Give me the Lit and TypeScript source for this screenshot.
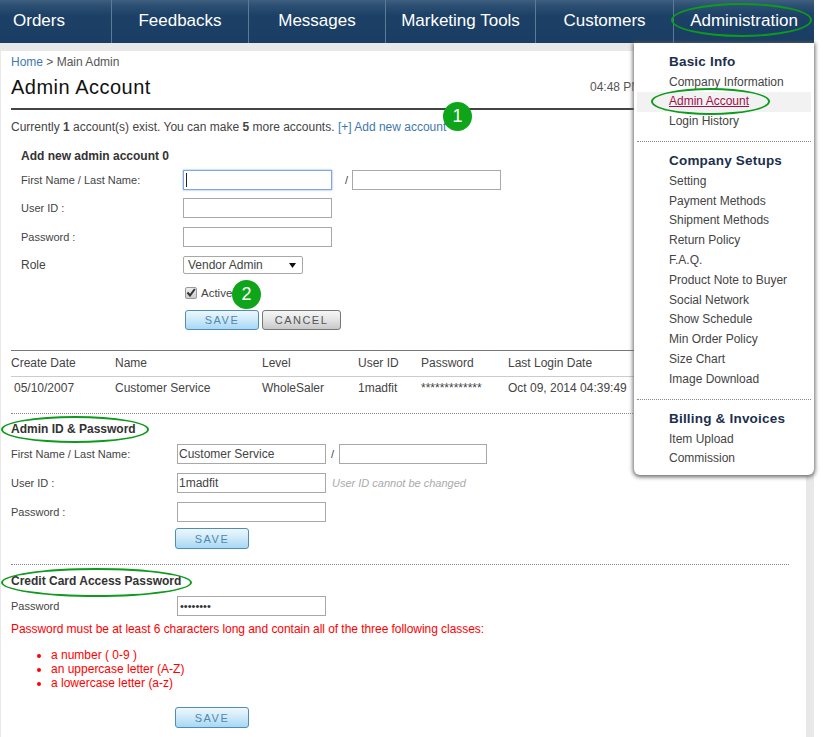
import { LitElement, html, css } from "lit";
import { customElement } from "lit/decorators.js";

const NAV = ["Orders", "Feedbacks", "Messages", "Marketing Tools", "Customers", "Administration"];
const MENU: { title: string; items: string[] }[] = [
  { title: "Basic Info", items: ["Company Information", "Admin Account", "Login History"] },
  { title: "Company Setups", items: ["Setting", "Payment Methods", "Shipment Methods", "Return Policy", "F.A.Q.", "Product Note to Buyer", "Social Network", "Show Schedule", "Min Order Policy", "Size Chart", "Image Download"] },
  { title: "Billing & Invoices", items: ["Item Upload", "Commission"] },
];

@customElement("app-root")
export class AppRoot extends LitElement {
  static styles = css`
    :host { display: block; position: relative; width: 823px; height: 737px; overflow: hidden; background: #fff;
      font-family: "Liberation Sans", Arial, sans-serif; font-size: 12px; color: #444; }
    * { box-sizing: border-box; }
    .shell { width: 814px; height: 737px; background: #e8e8e8; }
    nav { display: flex; height: 43px; background: linear-gradient(#3f5f7f 0, #2b4e72 6px, #1c4066 16px, #1a3d63 100%); }
    .tab { display: flex; align-items: center; justify-content: center; height: 43px; color: #fff; font-size: 17px; border-left: 1px solid #5d7a96; padding-bottom: 2px; }
    .tab:nth-child(1) { width: 111px; border-left: 0; justify-content: flex-start; padding-left: 13px; }
    .tab:nth-child(2) { width: 137px; }
    .tab:nth-child(3) { width: 137px; }
    .tab:nth-child(4) { width: 150px; }
    .tab:nth-child(5) { width: 138px; }
    .tab:nth-child(6) { width: 141px; }
    main { margin: 8px 0 0 1px; width: 805px; height: 686px; background: #fff; padding: 1px 17px 0 10px; }
    .crumb { line-height: 20px; color: #555; }
    a { color: #3f78ad; text-decoration: none; }
    .head { display: flex; justify-content: space-between; align-items: center; height: 30px; }
    h1 { margin: 0; font-size: 20px; font-weight: 400; color: #111; letter-spacing: .5px; }
    .time { width: 199px; white-space: nowrap; color: #555; }
    .rule { height: 2px; background: #444; margin-top: 6px; }
    .count { line-height: 18px; margin-top: 8px; }
    .add { padding-left: 10px; }
    h2 { margin: 0; font-size: 12px; line-height: 18px; color: #333; }
    .add h2 { margin-top: 11px; }
    .row { display: flex; align-items: center; }
    .label { flex: none; }
    .add .label { width: 162px; font-size: 11px; }
    .sec .label { width: 166px; font-size: 11px; }
    .add .r1 { margin-top: 5px; }
    .add .r2 { margin-top: 8px; }
    .add .r3 { margin-top: 9px; }
    .sec .r2, .sec .r3 { margin-top: 9px; }
    input { width: 149px; height: 20px; border: 1px solid #a8a8a8; padding: 0 1px; margin: 0; font: inherit; color: #444; background: #fff; outline: none; }
    input.focus { border-color: #7fa6e0; box-shadow: 0 0 2px #7fa6e0; background: linear-gradient(#222, #222) no-repeat 2px center / 1px 14px; }
    input.pw { font-size: 11px; padding-left: 2px; color: #333; }
    .slash { width: 20px; text-align: center; font-size: 11px; }
    .sec .slash { width: 13px; }
    .sec .slash + input { width: 148px; }
    .add .slash { width: 20px; text-align: right; padding-right: 4px; }
    .hint { margin-left: 6px; font-size: 11px; font-style: italic; color: #aaa; }
    .role { margin-top: 9px; height: 18px; }
    .role .label { font-size: 12px; }
    .select { display: flex; align-items: center; justify-content: space-between; width: 120px; height: 18px; border: 1px solid #a8a8a8; border-radius: 2px; padding: 0 6px 0 4px; }
    .active { display: flex; align-items: center; gap: 4px; margin: 13px 0 0 164px; height: 11px; font-size: 11.5px; }
    .check { display: flex; align-items: center; justify-content: center; width: 12px; height: 12px; border: 1px solid #999; border-radius: 2px; background: linear-gradient(#eee, #ccc); }
    .btns { display: flex; gap: 3px; margin: 12px 0 0 164px; }
    button { height: 20px; padding: 0; font: inherit; font-size: 11px; letter-spacing: 1.5px; border-radius: 3px; }
    .save { width: 74px; border: 1px solid #4f8db8; background: linear-gradient(#eef7fc, #d4ecfa 40%, #a7d8f5); color: #4f88ae; }
    .cancel { width: 79px; border: 1px solid #777; background: linear-gradient(#f6f6f6, #e8e8e8 40%, #c8c8c8); color: #555; }
    .table { margin-top: 20px; border-top: 1px solid #777; }
    .tr { display: grid; grid-template-columns: 104px 147px 96px 63px 87px 1fr; align-items: center; }
    .th { height: 26px; padding-bottom: 2px; border-bottom: 1px solid #ccc; }
    .td { height: 22px; }
    .td span:first-child { padding-left: 3px; }
    .dots { height: 1px; border-top: 1px dotted #888; }
    .d1 { margin-top: 14px; }
    .sec h2 { margin-top: 6px; }
    .sec .r1 { margin-top: 6px; }
    .sec .btn { margin: 6px 0 0 164px; }
    .sec .btn button { height: 21px; }
    .d2 { margin-top: 15px; }
    .s2 h2 { margin-top: 7px; }
    .warn { color: #f00; margin-top: 4px; line-height: 18px; letter-spacing: -.05px; }
    ul { margin: 10px 0 0; padding: 0 0 0 40px; color: #f00; line-height: 14px; }
    .s2 .btn { margin-top: 17px; }

    .menu { position: absolute; left: 634px; top: 43px; width: 180px; height: 432px; background: #fff; border-radius: 0 0 6px 6px; box-shadow: 0 1px 4px 1px #666; padding: 0 3px; z-index: 1; }
    .group { padding: 9px 0 0; }
    .group + .group { border-top: 1px dotted #888; margin-top: 9.5px; }
    .group h3 { margin: 0; padding-left: 32px; font-size: 13.5px; line-height: 20.5px; color: #1c2f4d; letter-spacing: .2px; }
    .item { padding-left: 32px; line-height: 19.8px; height: 19.8px; color: #444; }
    .item.cur { background: #f2f2f2; color: #a0104a; text-decoration: underline; }

    .ring { position: absolute; border: 2px solid #0e9a1c; border-radius: 50%; z-index: 2; }
    .a { left: 671px; top: 3px; width: 141px; height: 34px; }
    .b { left: 651px; top: 88px; width: 119px; height: 27px; }
    .c { left: 1px; top: 416px; width: 148px; height: 27px; }
    .e { left: 1px; top: 568px; width: 191px; height: 29px; }
    .badge { position: absolute; width: 29px; height: 29px; border-radius: 50%; background: #0ea51a; color: #fff; display: flex; align-items: center; justify-content: center; font-size: 18px; z-index: 2; }
    .b1 { left: 443px; top: 102px; }
    .b2 { left: 232px; top: 280px; }
  `;

  render() {
    return html`
      <div class="shell">
        <nav>${NAV.map((n) => html`<div class="tab">${n}</div>`)}</nav>
        <main>
          <div class="crumb"><a href="#">Home</a> &gt; Main Admin</div>
          <div class="head"><h1>Admin Account</h1><div class="time">04:48 PM</div></div>
          <div class="rule"></div>
          <div class="count">Currently <b>1</b> account(s) exist. You can make <b>5</b> more accounts. <a href="#">[+] Add new account</a></div>

          <div class="add">
            <h2>Add new admin account 0</h2>
            <div class="row r1"><span class="label">First Name / Last Name:</span><input class="focus" /><span class="slash">/</span><input /></div>
            <div class="row r2"><span class="label">User ID :</span><input /></div>
            <div class="row r3"><span class="label">Password :</span><input /></div>
            <div class="row role"><span class="label">Role</span><div class="select">Vendor Admin
              <svg width="7" height="5" viewBox="0 0 7 5"><path d="M0 0h7L3.500 5z" fill="#111"/></svg></div></div>
            <div class="active"><span class="check"><svg width="10" height="9" viewBox="0 0 10 9"><path d="M1.500 4.500L4 7.500 8.800 1" fill="none" stroke="#333" stroke-width="2"/></svg></span>Active</div>
            <div class="btns"><button class="save">SAVE</button><button class="cancel">CANCEL</button></div>
          </div>

          <div class="table">
            <div class="tr th"><span>Create Date</span><span>Name</span><span>Level</span><span>User ID</span><span>Password</span><span>Last Login Date</span></div>
            <div class="tr td"><span>05/10/2007</span><span>Customer Service</span><span>WholeSaler</span><span>1madfit</span><span>*************</span><span>Oct 09, 2014 04:39:49</span></div>
          </div>
          <div class="dots d1"></div>

          <div class="sec">
            <h2>Admin ID &amp; Password</h2>
            <div class="row r1"><span class="label">First Name / Last Name:</span><input value="Customer Service" /><span class="slash">/</span><input /></div>
            <div class="row r2"><span class="label">User ID :</span><input value="1madfit" /><span class="hint">User ID cannot be changed</span></div>
            <div class="row r3"><span class="label">Password :</span><input /></div>
            <div class="btn"><button class="save">SAVE</button></div>
          </div>
          <div class="dots d2"></div>

          <div class="sec s2">
            <h2>Credit Card Access Password</h2>
            <div class="row r1"><span class="label">Password</span><input class="pw" type="password" value="abcdefgh" /></div>
            <div class="warn">Password must be at least 6 characters long and contain all of the three following classes:</div>
            <ul><li>a number ( 0-9 )</li><li>an uppercase letter (A-Z)</li><li>a lowercase letter (a-z)</li></ul>
            <div class="btn"><button class="save">SAVE</button></div>
          </div>
        </main>
      </div>

      <div class="menu">
        ${MENU.map((g) => html`<div class="group"><h3>${g.title}</h3>${g.items.map((i) => html`<div class="item ${i === "Admin Account" ? "cur" : ""}">${i}</div>`)}</div>`)}
      </div>
      <div class="ring a"></div><div class="ring b"></div><div class="ring c"></div><div class="ring e"></div>
      <div class="badge b1">1</div><div class="badge b2">2</div>
    `;
  }
}
